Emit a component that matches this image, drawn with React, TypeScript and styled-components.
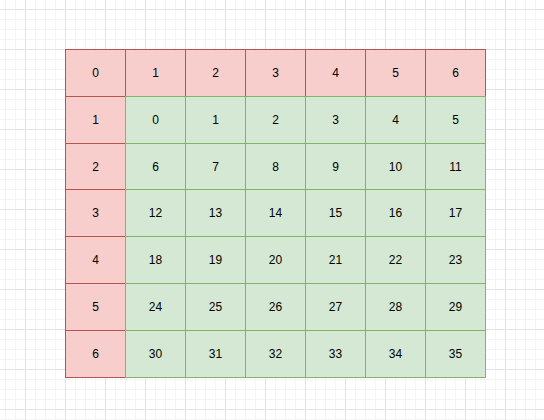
import styled, { createGlobalStyle } from "styled-components";

const GlobalStyle = createGlobalStyle`
  html, body {
    margin: 0;
    padding: 0;
  }
  body {
    font-family: "Liberation Sans", Arial, sans-serif;
  }
`;

const Canvas = styled.div`
  width: 544px;
  height: 420px;
  box-sizing: border-box;
  padding: 49px 0 0 65px;
  background-color: #ffffff;
  background-image:
    linear-gradient(to right, #e2e2e2 1px, transparent 1px),
    linear-gradient(to bottom, #e2e2e2 1px, transparent 1px),
    linear-gradient(to right, #f4f4f4 1px, transparent 1px),
    linear-gradient(to bottom, #f4f4f4 1px, transparent 1px);
  background-size: 40px 40px, 40px 40px, 10px 10px, 10px 10px;
  background-position: 25px 9px, 25px 9px, 5px 9px, 5px 9px;
  overflow: hidden;
`;

const Table = styled.div`
  display: grid;
  grid-template-columns: repeat(7, 60px);
  grid-template-rows: 47px 47px 46px 47px 47px 47px 47px;
  width: 420px;
`;

const Cell = styled.div<{ $head?: boolean }>`
  position: relative;
  z-index: ${(p) => (p.$head ? 0 : 1)};
  box-sizing: border-box;
  width: calc(100% + 1px);
  height: calc(100% + 1px);
  display: flex;
  align-items: center;
  justify-content: center;
  font-size: 12px;
  color: #000000;
  background: ${(p) => (p.$head ? "#f8cecc" : "#d5e8d4")};
  border: 1px solid ${(p) => (p.$head ? "#b85450" : "#82b366")};
`;

export default function App() {
  const cells = [];
  for (let r = 0; r < 7; r++) {
    for (let c = 0; c < 7; c++) {
      if (r === 0) {
        cells.push(
          <Cell key={`${r}-${c}`} $head>
            {c}
          </Cell>
        );
      } else if (c === 0) {
        cells.push(
          <Cell key={`${r}-${c}`} $head>
            {r}
          </Cell>
        );
      } else {
        cells.push(<Cell key={`${r}-${c}`}>{(r - 1) * 6 + (c - 1)}</Cell>);
      }
    }
  }
  return (
    <>
      <GlobalStyle />
      <Canvas>
        <Table>{cells}</Table>
      </Canvas>
    </>
  );
}
